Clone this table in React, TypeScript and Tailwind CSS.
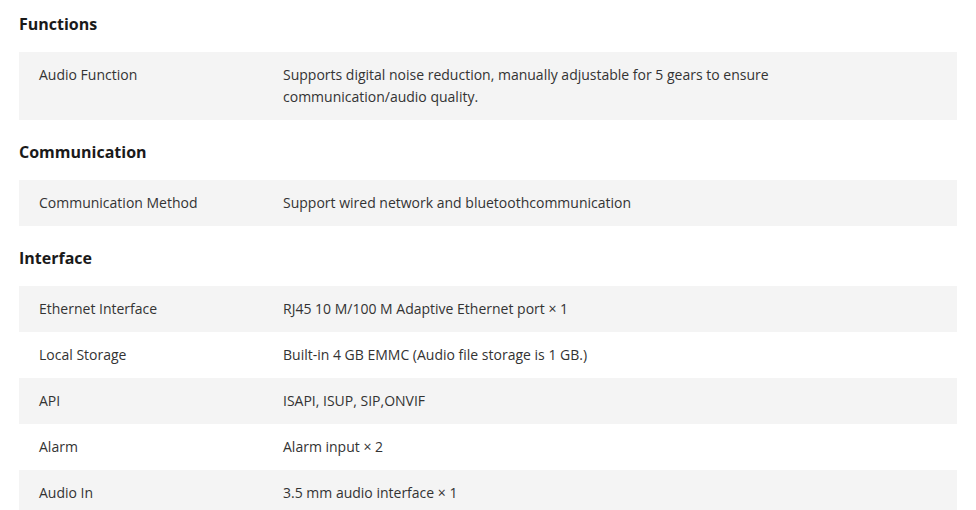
type Row = { label: string; value: string };

type Section = { title: string; rows: Row[] };

const sections: Section[] = [
  {
    title: "Functions",
    rows: [
      {
        label: "Audio Function",
        value:
          "Supports digital noise reduction, manually adjustable for 5 gears to ensure communication/audio quality.",
      },
    ],
  },
  {
    title: "Communication",
    rows: [
      {
        label: "Communication Method",
        value: "Support wired network and bluetoothcommunication",
      },
    ],
  },
  {
    title: "Interface",
    rows: [
      { label: "Ethernet Interface", value: "RJ45 10 M/100 M Adaptive Ethernet port × 1" },
      { label: "Local Storage", value: "Built-in 4 GB EMMC (Audio file storage is 1 GB.)" },
      { label: "API", value: "ISAPI, ISUP, SIP,ONVIF" },
      { label: "Alarm", value: "Alarm input × 2" },
      { label: "Audio In", value: "3.5 mm audio interface × 1" },
    ],
  },
];

export default function App() {
  return (
    <div className="min-h-screen bg-white pl-[19px] pr-[19px] font-['Open_Sans',sans-serif] text-[#333]">
      {sections.map((section, i) => (
        <div key={section.title} className={i === 0 ? "pt-[12px]" : "pt-[20px]"}>
          <h2 className="mb-[16px] text-[16px] leading-[24px] font-bold text-[#1a1a1a]">
            {section.title}
          </h2>
          <div className="flex flex-col">
            {section.rows.map((row, j) => (
              <div
                key={row.label}
                className={`flex py-[12px] text-[14px] leading-[22px] ${
                  j % 2 === 0 ? "bg-[#f4f4f4]" : "bg-white"
                }`}
              >
                <div className="w-[264px] shrink-0 pl-[20px]">{row.label}</div>
                <div className="w-[520px]">{row.value}</div>
              </div>
            ))}
          </div>
        </div>
      ))}
    </div>
  );
}
